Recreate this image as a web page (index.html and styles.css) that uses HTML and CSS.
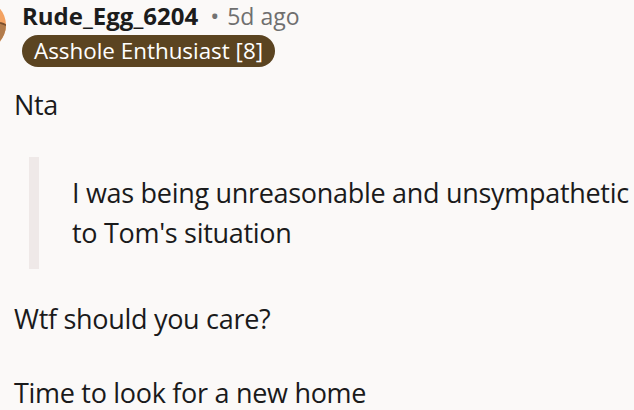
FILE: index.html
```html
<!DOCTYPE html>
<html>
<head>
<meta charset="utf-8">
<link rel="stylesheet" href="styles.css">
</head>
<body>
<div class="comment">
  <div class="header">
    <div class="avatar"><div class="avatar-lower"></div></div>
    <div class="meta">
      <div class="name-row">
        <span class="name">Rude_Egg_6204</span>
        <span class="dot">•</span>
        <span class="time">5d ago</span>
      </div>
      <span class="flair">Asshole Enthusiast [8]</span>
    </div>
  </div>
  <div class="body">
    <p>Nta</p>
    <blockquote class="quote"><p>I was being unreasonable and unsympathetic to Tom's situation</p></blockquote>
    <p class="spaced">Wtf should you care?</p>
    <p>Time to look for a new home</p>
  </div>
</div>
</body>
</html>
```

FILE: styles.css
```css
html, body {
  margin: 0;
  padding: 0;
  background: #fbf9f8;
}
body {
  font-family: "Open Sans", "Noto Sans", sans-serif;
  color: #1a1a1b;
  overflow: hidden;
  width: 634px;
  height: 410px;
}
.header {
  display: flex;
  gap: 16px;
  align-items: flex-start;
}
.avatar {
  width: 50px;
  height: 50px;
  border-radius: 50%;
  margin-left: -44px;
  background: #f3a262;
  position: relative;
  overflow: hidden;
  flex: none;
}
.avatar-lower {
  position: absolute;
  left: -10px;
  top: 20px;
  width: 80px;
  height: 60px;
  border-radius: 50%;
  background: #b27c4c;
  border-top: 2px solid #7a4e2c;
}
.meta {
  display: flex;
  flex-direction: column;
  align-items: flex-start;
  gap: 3px;
}
.name-row {
  display: flex;
  align-items: baseline;
  height: 32px;
  line-height: 32px;
}
.name {
  font-weight: 700;
  font-size: 24px;
  color: #1c1c1c;
}
.dot {
  font-size: 24px;
  color: #737373;
  margin-left: 12px;
  margin-right: 8px;
}
.time {
  font-size: 23px;
  color: #6f6f6f;
}
.flair {
  display: block;
  background: #5b4421;
  color: #ffffff;
  font-size: 22.4px;
  line-height: 32px;
  height: 32px;
  padding: 0 12px;
  border-radius: 16px;
}
.body {
  padding: 18px 0 0 14px;
  font-size: 27px;
  line-height: 40px;
  letter-spacing: -0.3px;
}
.body p {
  margin: 0 0 32px 0;
}
.body .spaced {
  margin-bottom: 34px;
}
.quote {
  margin: 0 0 30px 15px;
  padding: 16px 0 16px 33px;
  border-left: 10px solid #efe9e8;
}
.quote p {
  margin: 0 !important;
  width: 560px;
}
```
